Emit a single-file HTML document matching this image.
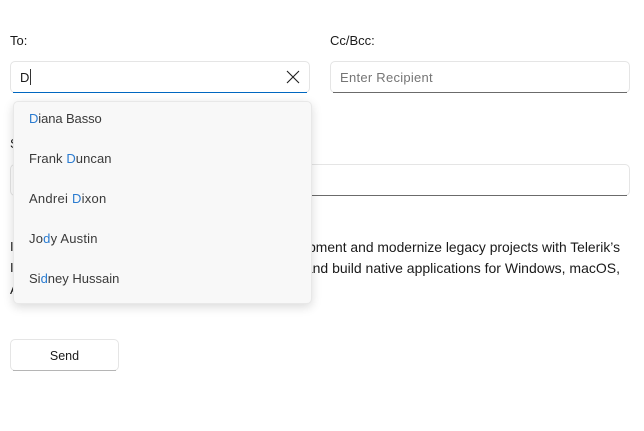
<!DOCTYPE html>
<html>
<head>
<meta charset="utf-8">
<style>
html,body{margin:0;padding:0;background:#fff;}
body{width:644px;height:431px;position:relative;overflow:hidden;font-family:"Liberation Sans",sans-serif;font-size:13px;color:#1a1a1a;}
.t{position:absolute;white-space:nowrap;line-height:18px;}
.box{position:absolute;box-sizing:border-box;background:#fff;border:1px solid #e5e5e5;border-radius:5px;}
.line{position:absolute;left:2px;right:2px;bottom:-1px;height:1px;}
.pop{position:absolute;left:13px;top:101px;width:299px;height:203px;box-sizing:border-box;background:#f8f8f8;border:1px solid #e8e8e8;border-radius:5px;box-shadow:0 3px 10px rgba(0,0,0,.15);}
.it{position:absolute;left:29px;color:#3a3a3a;}
b{font-weight:normal;color:#2a7bd0;}
</style>
</head>
<body>
<div class="t" style="left:10px;top:32px;">To:</div>
<div class="t" style="left:330px;top:32px;">Cc/Bcc:</div>

<div class="box" style="left:10px;top:61px;width:300px;height:32px;">
  <div class="line" style="background:#0067c0;height:1.5px;"></div>
</div>
<div class="t" style="left:20px;top:69px;">D</div>
<div style="position:absolute;left:30px;top:69px;width:1px;height:16px;background:#333;"></div>
<svg style="position:absolute;left:286px;top:70px;" width="14" height="14" viewBox="0 0 14 14"><path d="M1 1L13 13M13 1L1 13" stroke="#1f1f1f" stroke-width="1.1" fill="none"/></svg>

<div class="box" style="left:330px;top:61px;width:300px;height:32px;">
  <div class="line" style="background:#6b6b6b;"></div>
</div>
<div class="t" style="left:340px;top:69px;color:#757575;letter-spacing:.27px;">Enter Recipient</div>

<div class="t" style="left:10px;top:135px;">S</div>
<div class="box" style="left:10px;top:164px;width:620px;height:32px;">
  <div class="line" style="background:#6b6b6b;"></div>
</div>

<div class="t" style="left:10px;top:238px;">I</div>
<div class="t" style="left:10px;top:259px;">I</div>
<div class="t" style="left:10px;top:281px;">A</div>
<div class="t" style="right:24px;top:238px;font-size:13.85px;">Build modern apps for development and modernize legacy projects with Telerik’s</div>
<div class="t" style="right:24px;top:259px;font-size:14px;">Reuse your skills and code and build native applications for Windows, macOS,</div>

<div class="pop"></div>
<div class="t it" style="top:110px;letter-spacing:-.1px;"><b>D</b>iana Basso</div>
<div class="t it" style="top:150px;letter-spacing:.08px;">Frank <b>D</b>uncan</div>
<div class="t it" style="top:190px;letter-spacing:.25px;">Andrei <b>D</b>ixon</div>
<div class="t it" style="top:230px;letter-spacing:.2px;">Jo<b>d</b>y Austin</div>
<div class="t it" style="top:270px;">Si<b>d</b>ney Hussain</div>

<div class="box" style="left:10px;top:339px;width:109px;height:32px;">
  <div class="line" style="background:#b5b5b5;"></div>
</div>
<div class="t" style="left:10px;top:347px;width:109px;text-align:center;font-size:12.5px;">Send</div>
</body>
</html>
